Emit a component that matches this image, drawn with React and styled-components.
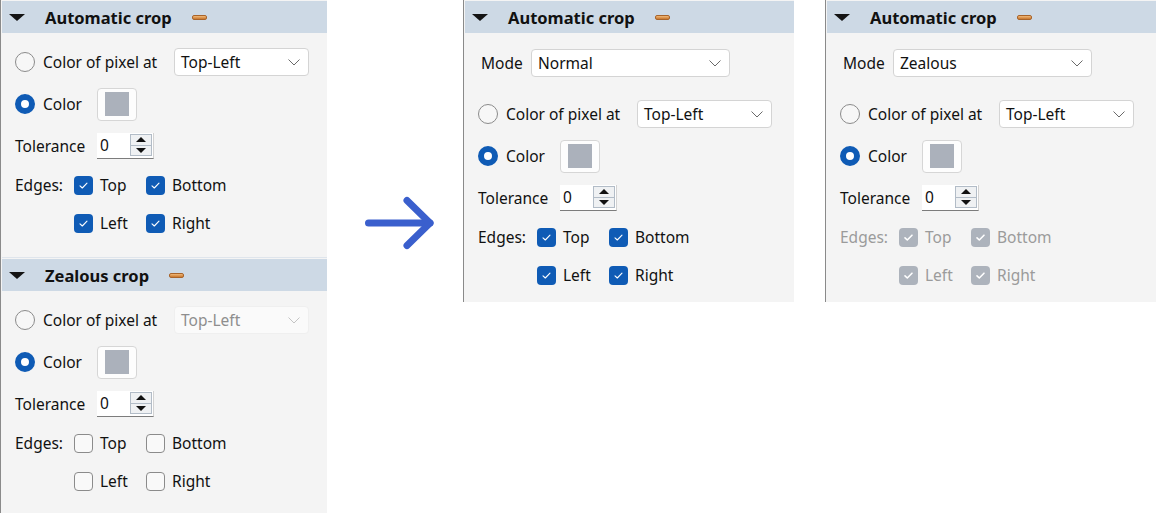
import React from 'react';
import styled, { createGlobalStyle } from 'styled-components';

/*
 * styled components
 */

const GlobalStyle = createGlobalStyle`
  html, body {
    margin: 0;
    padding: 0;
    background: #ffffff;
  }

  body {
    color: #111111;
    font-family: "Noto Sans", "Liberation Sans", sans-serif;
    font-size: 15.5px;
  }
`;

const Page = styled.div`
  align-items: flex-start;
  display: flex;
  height: 513px;
  overflow: hidden;
  width: 1156px;
`;

const Panel = styled.div`
  align-self: ${(p) => (p.$stretch ? 'stretch' : 'flex-start')};
  background: #f4f4f4;
  border-left: 1px solid #8a8a8a;
  box-sizing: border-box;
  display: flex;
  flex: none;
  flex-direction: column;
  margin-left: ${(p) => p.$offset || 0}px;
  padding: 1px 0 0 1px;
  width: ${(p) => p.$width}px;
`;

const Header = styled.div`
  align-items: center;
  background: #cdd9e5;
  display: flex;
  flex: none;
  height: 32px;
  padding-left: 7px;
`;

const Caret = styled.span`
  border-left: 8px solid transparent;
  border-right: 8px solid transparent;
  border-top: 7px solid #141414;
  height: 0;
  margin-right: 20px;
  width: 0;
`;

const Title = styled.span`
  font-size: 16.5px;
  font-weight: 700;
  padding-top: 1px;
`;

const Pin = styled.span`
  background: linear-gradient(#f0b878, #c9782e);
  border: 1px solid #a8642a;
  border-radius: 2px;
  box-sizing: border-box;
  height: 5px;
  margin-left: 20px;
  width: 15px;
`;

const Separator = styled.div`
  background: #dfe5ec;
  height: 1px;
  margin-bottom: 1px;
`;

const Body = styled.div`
  display: flex;
  flex-direction: column;
  padding: ${(p) => p.$top}px 0 ${(p) => p.$bottom}px 13px;
`;

const Row = styled.div`
  align-items: center;
  display: flex;
  flex: none;
  height: ${(p) => p.$height}px;
  margin-bottom: ${(p) => p.$after || 0}px;
`;

const LabelCell = styled.label`
  align-items: center;
  box-sizing: border-box;
  display: flex;
  flex: none;
  gap: 8px;
  padding-left: ${(p) => p.$indent || 0}px;
  width: ${(p) => p.$width}px;
`;

const Text = styled.span`
  color: ${(p) => (p.$disabled ? '#9b9b9b' : '#111111')};
  white-space: nowrap;
`;

const Radio = styled.span`
  background: ${(p) => (p.$checked ? '#ffffff' : '#f7f7f7')};
  border: ${(p) => (p.$checked ? '6px solid #0f5bb5' : '1px solid #8b8b8b')};
  border-radius: 50%;
  box-sizing: border-box;
  flex: none;
  height: 20px;
  width: 20px;
`;

const Select = styled.div`
  align-items: center;
  background: ${(p) => (p.$disabled ? '#fafafa' : '#ffffff')};
  border: 1px solid ${(p) => (p.$disabled ? '#efefef' : '#d4d4d4')};
  border-radius: 4px;
  box-sizing: border-box;
  color: ${(p) => (p.$disabled ? '#8e8e8e' : '#111111')};
  display: flex;
  height: 28px;
  justify-content: space-between;
  padding: 0 8px 0 6px;
  width: ${(p) => p.$width}px;
`;

const SwatchButton = styled.div`
  align-items: center;
  background: #fdfdfd;
  border: 1px solid #d6d6d6;
  border-radius: 4px;
  box-sizing: border-box;
  display: flex;
  height: 33px;
  justify-content: center;
  width: 40px;
`;

const Swatch = styled.div`
  background: #abb1bb;
  height: 24px;
  width: 24px;
`;

const Spin = styled.div`
  background: #ffffff;
  border-bottom: 1px solid #7c7c7c;
  border-right: 1px solid #d2d2d2;
  box-sizing: border-box;
  display: flex;
  height: 26px;
  width: 57px;
`;

const SpinValue = styled.span`
  align-self: center;
  padding-left: 3px;
  width: 30px;
`;

const SpinButtons = styled.div`
  display: flex;
  flex-direction: column;
  padding-top: 1px;
`;

const SpinButton = styled.div`
  align-items: center;
  background: #eff1f3;
  border: 1px solid #b2bcc7;
  box-sizing: border-box;
  display: flex;
  height: ${(p) => p.$height}px;
  justify-content: center;
  margin-top: ${(p) => p.$top || 0}px;
  width: 22px;
`;

const SpinArrow = styled.span`
  border-left: 5px solid transparent;
  border-right: 5px solid transparent;
  ${(p) => (p.$up ? 'border-bottom' : 'border-top')}: 5px solid #111111;
  height: 0;
  width: 0;
`;

const EdgeGrid = styled.div`
  align-items: center;
  display: grid;
  grid-auto-rows: 38px;
  grid-template-columns: 59px 72px auto;
`;

const CheckItem = styled.label`
  align-items: center;
  display: flex;
  gap: 7px;
`;

const Box = styled.span`
  align-items: center;
  background: ${(p) => {
    if (!p.$checked) return '#f9f9f9';
    return p.$disabled ? '#adb3bc' : '#0f5bb5';
  }};
  border: ${(p) => (p.$checked ? 'none' : '1px solid #8b8b8b')};
  border-radius: 4px;
  box-sizing: border-box;
  display: flex;
  flex: none;
  height: 19px;
  justify-content: center;
  width: 19px;
`;

const ArrowCell = styled.div`
  box-sizing: border-box;
  flex: none;
  padding: 195px 0 0 34px;
  width: 136px;
`;

/*
 * small drawings
 */

const Chevron = ({ disabled }) => (
  <svg width="12" height="7" viewBox="0 0 12 7">
    <polyline
        points="0.5,0.5 6,6 11.5,0.5"
        fill="none"
        stroke={disabled ? '#c4c4c4' : '#6a6a6a'}
        strokeWidth="1" />
  </svg>
);

const Tick = ({ thick }) => (
  <svg width="19" height="19" viewBox="0 0 19 19">
    <polyline
        points="6,9.8 8.3,12 13,7.2"
        fill="none"
        stroke="#ffffff"
        strokeWidth={thick ? 1.6 : 1.1}
        strokeLinecap="round"
        strokeLinejoin="round" />
  </svg>
);

const BigArrow = () => (
  <svg width="80" height="58" viewBox="0 0 80 58">
    <g fill="none" stroke="#3a5fcd" strokeWidth="7" strokeLinecap="round" strokeLinejoin="round">
      <line x1="7.5" y1="28" x2="69" y2="28" />
      <polyline points="46,5.5 69,28 46,50.5" />
    </g>
  </svg>
);

/*
 * parts
 */

const Check = ({ label, checked, disabled }) => (
  <CheckItem>
    <Box $checked={checked} $disabled={disabled}>
      {checked && <Tick thick={disabled} />}
    </Box>
    <Text $disabled={disabled}>{label}</Text>
  </CheckItem>
);

const CropSection = ({
  title,
  mode,
  pickerDisabled,
  edgesChecked,
  edgesDisabled,
  top,
  bottom
}) => (
  <>
    <Header>
      <Caret />
      <Title>{title}</Title>
      <Pin />
    </Header>
    <Body $top={top} $bottom={bottom}>
      {
        mode && (
          <Row $height={42} $after={9}>
            <LabelCell $width={53} $indent={3}>
              <Text>Mode</Text>
            </LabelCell>
            <Select $width={199}>
              <span>{mode}</span>
              <Chevron />
            </Select>
          </Row>
        )
      }
      <Row $height={42}>
        <LabelCell $width={159}>
          <Radio />
          <Text>Color of pixel at</Text>
        </LabelCell>
        <Select $width={135} $disabled={pickerDisabled}>
          <span>Top-Left</span>
          <Chevron disabled={pickerDisabled} />
        </Select>
      </Row>
      <Row $height={42}>
        <LabelCell $width={82}>
          <Radio $checked />
          <Text>Color</Text>
        </LabelCell>
        <SwatchButton>
          <Swatch />
        </SwatchButton>
      </Row>
      <Row $height={41}>
        <LabelCell $width={82}>
          <Text>Tolerance</Text>
        </LabelCell>
        <Spin>
          <SpinValue>0</SpinValue>
          <SpinButtons>
            <SpinButton $height={12}><SpinArrow $up /></SpinButton>
            <SpinButton $height={11} $top={-1}><SpinArrow /></SpinButton>
          </SpinButtons>
        </Spin>
      </Row>
      <EdgeGrid>
        <Text $disabled={edgesDisabled}>Edges:</Text>
        <Check label="Top" checked={edgesChecked} disabled={edgesDisabled} />
        <Check label="Bottom" checked={edgesChecked} disabled={edgesDisabled} />
        <span />
        <Check label="Left" checked={edgesChecked} disabled={edgesDisabled} />
        <Check label="Right" checked={edgesChecked} disabled={edgesDisabled} />
      </EdgeGrid>
    </Body>
  </>
);

export default function App() {
  return (
    <>
      <GlobalStyle />
      <Page>
        <Panel $width={327} $stretch>
          <CropSection title="Automatic crop" edgesChecked top={8} bottom={15} />
          <Separator />
          <CropSection title="Zealous crop" pickerDisabled top={8} bottom={0} />
        </Panel>
        <ArrowCell>
          <BigArrow />
        </ArrowCell>
        <Panel $width={331}>
          <CropSection title="Automatic crop" mode="Normal" edgesChecked top={9} bottom={8} />
        </Panel>
        <Panel $width={331} $offset={31}>
          <CropSection
              title="Automatic crop"
              mode="Zealous"
              edgesChecked
              edgesDisabled
              top={9}
              bottom={8} />
        </Panel>
      </Page>
    </>
  );
}
